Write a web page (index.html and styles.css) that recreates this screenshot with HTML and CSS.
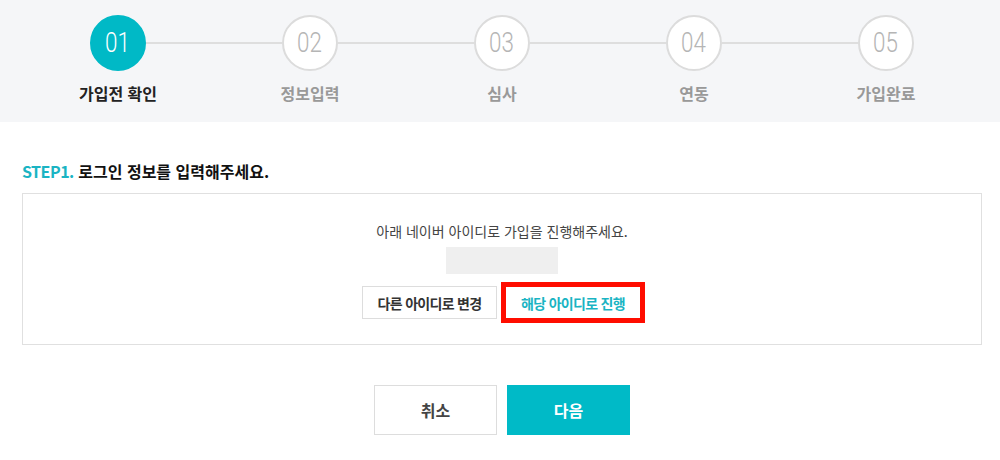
FILE: index.html
```html
<!DOCTYPE html>
<html lang="ko">
<head>
<meta charset="utf-8">
<title>가입전 확인</title>
<link rel="stylesheet" href="styles.css">
</head>
<body>
<div class="band">
  <ol class="steps">
    <li class="step active first">
      <div class="dot-row"><span class="half"></span><span class="dot"><span class="num">01</span></span><span class="half"></span></div>
      <div class="label">가입전 확인</div>
    </li>
    <li class="step">
      <div class="dot-row"><span class="half"></span><span class="dot"><span class="num">02</span></span><span class="half"></span></div>
      <div class="label">정보입력</div>
    </li>
    <li class="step">
      <div class="dot-row"><span class="half"></span><span class="dot"><span class="num">03</span></span><span class="half"></span></div>
      <div class="label">심사</div>
    </li>
    <li class="step">
      <div class="dot-row"><span class="half"></span><span class="dot"><span class="num">04</span></span><span class="half"></span></div>
      <div class="label">연동</div>
    </li>
    <li class="step last">
      <div class="dot-row"><span class="half"></span><span class="dot"><span class="num">05</span></span><span class="half"></span></div>
      <div class="label">가입완료</div>
    </li>
  </ol>
</div>
<div class="content">
  <h2 class="title"><span class="step-no">STEP1.</span> 로그인 정보를 입력해주세요.</h2>
  <div class="box">
    <p class="msg">아래 네이버 아이디로 가입을 진행해주세요.</p>
    <div class="idbox"></div>
    <div class="choice">
      <button class="btn-change">다른 아이디로 변경</button>
      <button class="btn-go">해당 아이디로 진행</button>
    </div>
  </div>
  <div class="actions">
    <button class="btn-cancel">취소</button>
    <button class="btn-next">다음</button>
  </div>
</div>
</body>
</html>
```
FILE: styles.css
```css
* { box-sizing: border-box; }
body {
  margin: 0;
  background: #fff;
  font-family: "Noto Sans CJK KR", "Noto Sans", sans-serif;
  color: #222;
}
.band {
  background: #f5f6f8;
  height: 122px;
}
.steps {
  list-style: none;
  margin: 0 0 0 22px;
  padding: 15px 0 0;
  width: 960px;
  display: flex;
}
.step {
  width: 192px;
  display: flex;
  flex-direction: column;
  align-items: center;
}
.dot-row {
  width: 100%;
  display: flex;
  align-items: center;
}
.half {
  flex: 1;
  height: 2px;
  background: #dedede;
}
.first .half:first-child,
.last .half:last-child { background: transparent; }
.dot {
  width: 56px;
  height: 56px;
  border-radius: 50%;
  border: 2px solid #dcdcdc;
  background: #fff;
  display: flex;
  align-items: center;
  justify-content: center;
}
.num {
  display: inline-block;
  font-family: Roboto, sans-serif;
  font-weight: 300;
  font-size: 28px;
  line-height: 1;
  color: #b5b5b5;
  transform: scaleX(0.8);
}
.active .dot {
  background: #00b9c6;
  border-color: #00b9c6;
}
.active .num { color: #fff; }
.label {
  margin-top: 12px;
  font-size: 16px;
  line-height: 20px;
  font-weight: 700;
  color: #999;
}
.active .label { color: #222; }

.content {
  margin-left: 22px;
  width: 960px;
}
.title {
  margin: 39px 0 12px;
  font-size: 16px;
  line-height: 20px;
  font-weight: 700;
  color: #111;
}
.step-no {
  color: #1ab4c3;
  letter-spacing: -0.5px;
}
.box {
  border: 1px solid #e0e0e0;
  height: 152px;
  padding-top: 27px;
  display: flex;
  flex-direction: column;
  align-items: center;
}
.msg {
  margin: 0;
  font-size: 14px;
  line-height: 20px;
  color: #444;
}
.idbox {
  margin-top: 6px;
  width: 112px;
  height: 27px;
  background: #efefef;
}
.choice {
  margin-top: 8px;
  display: flex;
  align-items: center;
  gap: 4px;
  padding-left: 3px;
}
button {
  font-family: "Noto Sans CJK KR", "Noto Sans", sans-serif;
  cursor: pointer;
  padding: 0;
}
.btn-change {
  width: 135px;
  height: 33px;
  border: 1px solid #ddd;
  background: #fff;
  font-size: 14px;
  font-weight: 700;
  color: #333;
  letter-spacing: -0.7px;
}
.btn-go {
  width: 144px;
  height: 41px;
  border: 5px solid #ff0d00;
  background: #fff;
  font-size: 14px;
  font-weight: 700;
  color: #1ab4c3;
  letter-spacing: -0.7px;
}
.actions {
  margin-top: 40px;
  display: flex;
  justify-content: center;
  gap: 10px;
}
.btn-cancel, .btn-next {
  width: 123px;
  height: 50px;
  font-size: 16px;
  font-weight: 700;
}
.btn-cancel {
  border: 1px solid #ddd;
  background: #fff;
  color: #444;
}
.btn-next {
  border: 0;
  background: #00bac7;
  color: #fff;
}
```
